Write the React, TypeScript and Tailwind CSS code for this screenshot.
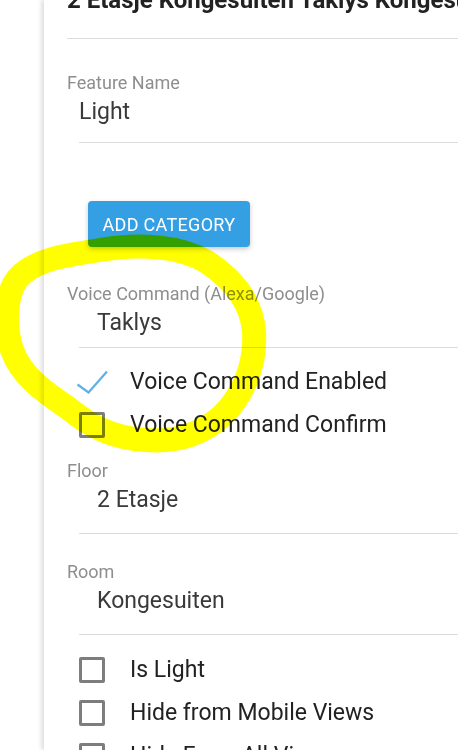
function Field({ label, value, indent, pb }: { label: string; value: string; indent?: boolean; pb: string }) {
  return (
    <div>
      <div className="text-[18px] leading-[22px] text-[#8e8e8e]">{label}</div>
      <div className={`ml-[12px] border-b border-[#dcdcdc] pt-[3px] text-[23px] leading-[30px] text-[#3a3a3a] ${pb} ${indent ? 'pl-[18px]' : ''}`}>
        {value}
      </div>
    </div>
  );
}

function CheckRow({ label, checked }: { label: string; checked?: boolean }) {
  return (
    <div className="ml-[12px] flex h-[43px] items-center">
      <div className="flex w-[26px] items-center justify-center">
        {checked ? (
          <svg width="32" height="24" viewBox="0 0 32 24" className="shrink-0">
            <polyline points="1.5,14.5 12.5,22.5 31,1.5" fill="none" stroke="#5eb0e5" strokeWidth="2.2" />
          </svg>
        ) : (
          <div className="h-[26px] w-[26px] rounded-[2px] border-[3px] border-[#7d7d7d]" />
        )}
      </div>
      <span className="ml-[25px] text-[23px] leading-[30px] text-[#222]">{label}</span>
    </div>
  );
}

export default function App() {
  return (
    <div className="relative h-[750px] overflow-hidden bg-white font-['Roboto',sans-serif]">
      <div className="flex h-full">
        <div className="w-[44px] shrink-0 bg-white" />
        <div className="flex-1 overflow-hidden bg-white pl-[23px] shadow-[-3px_0_4px_rgba(0,0,0,0.12)]">
          {/* Header */}
          <div className="flex h-[39px] items-start border-b border-[#dcdcdc]">
            <div className="-mt-[15px] whitespace-nowrap text-[24px] font-bold leading-[30px] text-[#222]">
              2 Etasje Kongesuiten Taklys Kongesuiten
            </div>
          </div>

          <div className="mt-[33px]">
            <Field label="Feature Name" value="Light" pb="pb-[15px]" />
          </div>

          <button className="ml-[21px] mt-[58px] h-[46px] w-[162px] rounded-[4px] bg-[#349fe3] text-[18px] font-normal tracking-[0.3px] text-white shadow-[0_2px_5px_rgba(0,0,0,0.22)]">
            ADD CATEGORY
          </button>

          <div className="mt-[36px]">
            <Field label="Voice Command (Alexa/Google)" value="Taklys" indent pb="pb-[9px]" />
          </div>

          <div className="mt-[12px]">
            <CheckRow label="Voice Command Enabled" checked />
            <CheckRow label="Voice Command Confirm" />
          </div>

          <div className="mt-[14px]">
            <Field label="Floor" value="2 Etasje" indent pb="pb-[18px]" />
          </div>

          <div className="mt-[27px]">
            <Field label="Room" value="Kongesuiten" indent pb="pb-[18px]" />
          </div>

          <div className="mt-[13px]">
            <CheckRow label="Is Light" />
            <CheckRow label="Hide from Mobile Views" />
            <CheckRow label="Hide From All Views" />
          </div>
        </div>
      </div>

      {/* yellow highlight scribble */}
      <svg
        className="pointer-events-none absolute left-0 top-0 mix-blend-multiply"
        width="458"
        height="750"
        viewBox="0 0 458 750"
      >
        <path
          d="M100 250 C 140 243, 180 246, 207 262 C 234 280, 252 302, 254 332 C 256 364, 244 394, 222 416 C 200 436, 172 442, 145 440 C 112 438, 90 426, 68 408 C 48 394, 22 378, 12 350 C 4 326, 6 300, 14 284 C 24 266, 50 258, 75 254 Z"
          fill="none"
          stroke="#ffff00"
          strokeWidth="24"
          strokeLinejoin="round"
        />
      </svg>
    </div>
  );
}
